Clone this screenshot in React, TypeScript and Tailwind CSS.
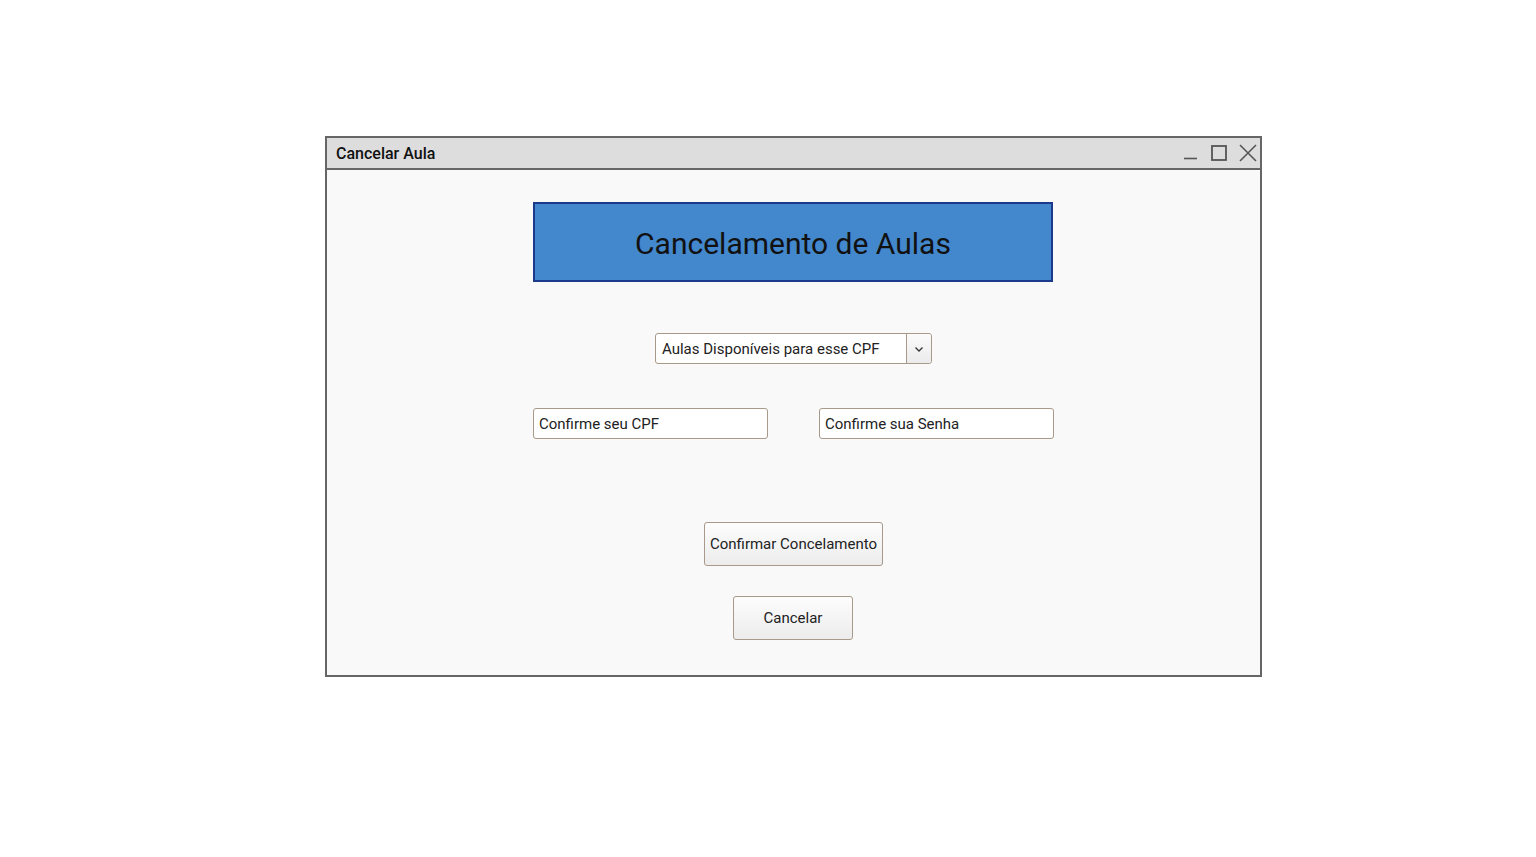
import React from 'react';

const font = { fontFamily: 'Roboto, "Liberation Sans", sans-serif' };

export default function App() {
  return (
    <div className="min-h-[857px] w-full bg-white pt-[136px] pl-[325px]" style={font}>
      <div className="w-[937px] h-[541px] border-2 border-[#666666] bg-[#f9f9f9] flex flex-col">
        {/* title bar */}
        <div className="h-[32px] shrink-0 bg-[#dddddd] border-b-2 border-[#666666] flex items-center justify-between pl-[9px] pr-[2px]">
          <span className="text-[16px] font-medium text-[#111] pt-[1px]">Cancelar Aula</span>
          <div className="flex items-center text-[#555]">
            <svg width="16" height="16" viewBox="0 0 16 16" className="mr-[11px]">
              <line x1="1" y1="13.5" x2="14" y2="13.5" stroke="#555" strokeWidth="1.6" />
            </svg>
            <svg width="18" height="18" viewBox="0 0 18 18" className="mr-[10px]">
              <rect x="2" y="2" width="14" height="14" fill="none" stroke="#555" strokeWidth="1.8" />
            </svg>
            <svg width="20" height="20" viewBox="0 0 20 20">
              <path d="M2 2 L18 18 M18 2 L2 18" stroke="#555" strokeWidth="1.6" />
            </svg>
          </div>
        </div>

        {/* content */}
        <div className="flex flex-col items-center pt-[32px]">
          <div className="w-[520px] h-[80px] mr-[1px] bg-[#4387cc] border-2 border-[#1b3a8c] flex items-center justify-center pt-[2px]">
            <span className="text-[30px] text-[#111]">Cancelamento de Aulas</span>
          </div>

          <div className="mt-[51px] w-[277px] h-[31px] bg-white border border-[#a8998a] rounded-[3px] flex">
            <div className="flex-1 flex items-center pl-[6px] pt-[1px] text-[15px] text-[#222]">
              Aulas Disponíveis para esse CPF
            </div>
            <div className="w-[25px] border-l border-[#a8998a] bg-gradient-to-b from-[#fbfbfb] to-[#ebebeb] flex items-center justify-center rounded-r-[3px]">
              <svg width="10" height="8" viewBox="0 0 10 8">
                <path d="M1.5 2.5 L5 6 L8.5 2.5" fill="none" stroke="#333" strokeWidth="1.3" />
              </svg>
            </div>
          </div>

          <div className="mt-[44px] flex gap-[51px]">
            <div className="w-[235px] h-[31px] bg-white border border-[#a8998a] rounded-[3px] flex items-center pl-[5px] pt-[1px] text-[15px] text-[#222]">
              Confirme seu CPF
            </div>
            <div className="w-[235px] h-[31px] bg-white border border-[#a8998a] rounded-[3px] flex items-center pl-[5px] pt-[1px] text-[15px] text-[#222]">
              Confirme sua Senha
            </div>
          </div>

          <button className="mt-[83px] w-[179px] h-[44px] border border-[#a8998a] rounded-[3px] bg-gradient-to-b from-[#fdfdfd] to-[#ececec] text-[15px] text-[#222] flex items-center justify-center">
            Confirmar Concelamento
          </button>

          <button className="mt-[30px] mr-[1px] w-[120px] h-[44px] border border-[#a8998a] rounded-[3px] bg-gradient-to-b from-[#fdfdfd] to-[#ececec] text-[15px] text-[#222] flex items-center justify-center">
            Cancelar
          </button>
        </div>
      </div>
    </div>
  );
}
